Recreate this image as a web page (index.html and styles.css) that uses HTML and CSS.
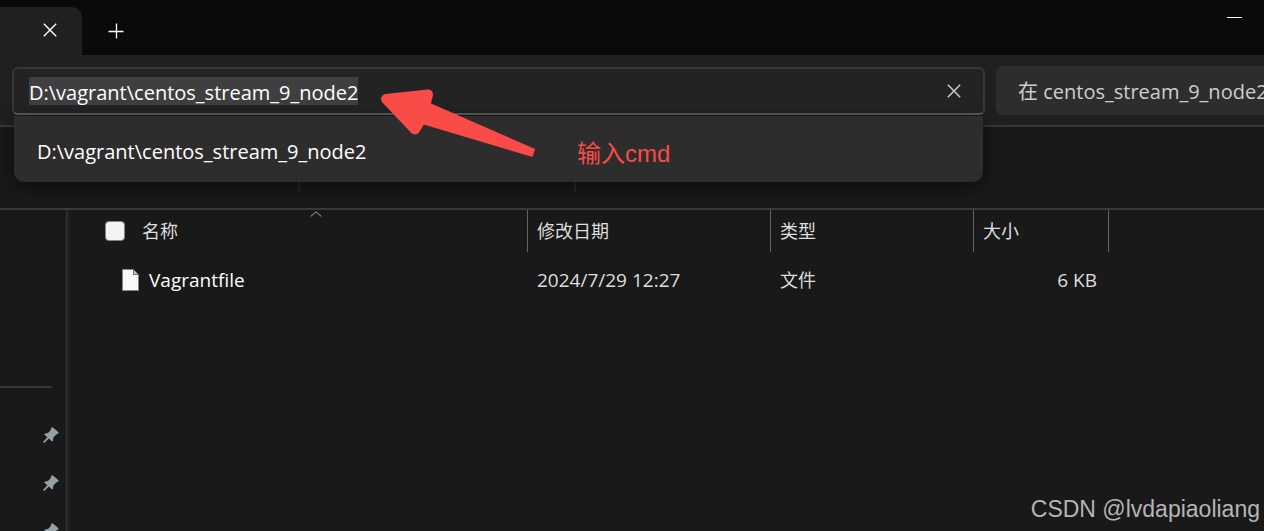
FILE: index.html
```html
<!DOCTYPE html>
<html lang="zh-CN">
<head>
<meta charset="utf-8">
<title>centos_stream_9_node2</title>
<link rel="stylesheet" href="styles.css">
</head>
<body>
<svg class="defs" aria-hidden="true">
  <symbol id="pin" viewBox="0 0 16 16"><path d="M8.4 .5 9.6 .3 15.5 5.3 15.4 6.6 13.3 7.6 10.6 10.3 9.8 14 8.7 14.2 5.8 11.5 1.4 15.7 .3 15.7 .3 14.6 4.4 10.2 1.4 7.8 1.7 6.8 5.3 5.8 7.6 3.2Z" fill="currentColor"/></symbol>
  <symbol id="cross" viewBox="0 0 14 14"><path d="M.8 .8 13.2 13.2M13.2 .8 .8 13.2" fill="none" stroke="currentColor" stroke-width="1.4"/></symbol>
</svg>
<div class="window">
  <header class="titlebar">
    <div class="tab"><button class="icon-button" aria-label="关闭标签页"><svg class="cross"><use href="#cross"/></svg></button></div>
    <button class="icon-button new-tab" aria-label="新建标签页"><svg class="plus" viewBox="0 0 16 16"><path d="M8.5 .5V15.5M.5 8.5H15.5" stroke="currentColor" stroke-width="1.3"/></svg></button>
    <button class="icon-button minimize" aria-label="最小化"><span class="minimize-line"></span></button>
  </header>
  <div class="navbar">
    <div class="address">
      <input class="address-input" type="text" aria-label="地址" value="D:\vagrant\centos_stream_9_node2" spellcheck="false">
      <button class="icon-button clear" aria-label="清除"><svg class="cross"><use href="#cross"/></svg></button>
      <div class="suggestions"><button class="suggestion">D:\vagrant\centos_stream_9_node2</button></div>
    </div>
    <div class="search"><input class="search-input" type="text" aria-label="搜索" placeholder="在 centos_stream_9_node2 中搜索"></div>
  </div>
  <div class="toolbar"><span class="separator"></span><span class="separator"></span></div>
  <div class="content">
    <nav class="sidebar">
      <div class="rule"></div>
      <button class="icon-button pin-item" aria-label="已固定 1"><svg class="pin"><use href="#pin"/></svg></button>
      <button class="icon-button pin-item" aria-label="已固定 2"><svg class="pin"><use href="#pin"/></svg></button>
      <button class="icon-button pin-item" aria-label="已固定 3"><svg class="pin"><use href="#pin"/></svg></button>
    </nav>
    <div class="splitter"></div>
    <main class="files">
      <table class="file-table">
        <colgroup><col class="col-name"><col class="col-date"><col class="col-type"><col class="col-size"></colgroup>
        <thead>
          <tr>
            <th class="name-head"><label class="name-label"><input class="check" type="checkbox">名称</label><svg class="sort" viewBox="0 0 12 6"><path d="M.7 5.5 6 .8 11.3 5.5" fill="none" stroke="currentColor"/></svg></th>
            <th>修改日期</th><th>类型</th><th>大小</th>
          </tr>
        </thead>
        <tbody>
          <tr>
            <td><div class="file-name"><svg class="file-icon" viewBox="0 0 17 22"><path d="M.5 .5H11.5L16.5 5.5V21.5H.5Z" fill="#fafafa" stroke="#858585"/><path d="M11.5 .5V5.5H16.5Z" fill="#c8c8c8" stroke="#707070"/></svg>Vagrantfile</div></td>
            <td>2024/7/29 12:27</td><td class="type">文件</td><td class="size">6 KB</td>
          </tr>
        </tbody>
      </table>
    </main>
  </div>
  <svg class="arrow" viewBox="0 0 156 48"><path d="M6 11 48 6.500 42 30 35 41.500Z" fill="#f94b47" stroke="#f94b47" stroke-width="10" stroke-linejoin="round"/><path d="M50 15 155 61 152.500 69 42 36Z" fill="#f94b47"/></svg>
  <div class="note">输入cmd</div>
  <div class="watermark">CSDN @lvdapiaoliang</div>
</div>
</body>
</html>
```
FILE: styles.css
```css
* { box-sizing: border-box; }
body {
  margin: 0;
  background: #191919;
  color: #fff;
  font: 20px/28px "Open Sans", "Noto Sans CJK SC", sans-serif;
}
button, input { margin: 0; padding: 0; border: 0; background: none; color: inherit; font: inherit; }
.defs { position: absolute; width: 0; height: 0; }
.window { position: relative; display: flex; flex-direction: column; height: 100vh; overflow: hidden; }
.icon-button { display: grid; place-items: center; flex: none; }
.cross { width: 14px; height: 14px; }

.titlebar { display: flex; height: 55px; background: #0a0a0a; }
.tab {
  display: flex;
  justify-content: flex-end;
  width: 82px;
  margin-top: 7px;
  padding: 0 16px 0 0;
  border-radius: 0 10px 0 0;
  background: #202020;
}
.tab .icon-button { width: 32px; height: 46px; }
.new-tab { width: 68px; height: 62px; }
.plus { width: 16px; height: 16px; }
.minimize { width: 60px; height: 35px; margin-left: auto; }
.minimize-line { width: 15px; height: 1px; background: #fff; }

.navbar { display: flex; gap: 11px; height: 72px; padding: 11px 0 10px 12px; border-bottom: 2px solid #373737; background: #202020; }
.address {
  position: relative;
  display: flex;
  align-items: center;
  justify-content: space-between;
  flex: 1;
  min-width: 0;
  height: 48px;
  margin-top: 1px;
  padding: 0 14px 0 15px;
  border: 2px solid #373737;
  border-bottom-color: #5c5c5c;
  border-radius: 6px;
  background: #232323;
}
.address-input { field-sizing: content; height: 28px; padding-top: 3px; background: #3f3f3f; outline: none; }
.clear { width: 30px; height: 32px; color: #d0d0d0; }
.suggestions {
  position: absolute;
  z-index: 1;
  top: 100%;
  left: 0;
  right: 0;
  margin-top: 3px;
  padding: 22px 23px 16px;
  border-radius: 0 0 10px 10px;
  background: #2d2d2d;
  box-shadow: 0 4px 16px #0008, 0 -1px #191919;
}
.suggestion { display: block; height: 28px; }
.search { flex: 0 0 268px; height: 49px; padding: 0 0 0 22px; overflow: hidden; border-radius: 6px 0 0 6px; background: #2d2d2d; }
.search-input { width: 360px; height: 49px; padding-top: 2px; outline: none; }
.search-input::placeholder { color: #cecece; opacity: 1; }

.toolbar { display: flex; align-items: flex-end; gap: 274px; height: 83px; padding: 0 0 17px 298px; border-bottom: 2px solid #3a3a3a; }
.separator { width: 2px; height: 36px; background: #2a2a2a; }

.content { display: flex; flex: 1; min-height: 0; }
.sidebar { width: 64px; padding-top: 176px; overflow: hidden; }
.rule { width: 52px; height: 2px; margin-bottom: 23px; background: #373737; }
.pin-item { width: 52px; height: 48px; padding-left: 35px; margin-left: 8px; color: #95a0a7; }
.sidebar .pin-item { justify-items: start; }
.pin { width: 16px; height: 16px; }
.splitter { width: 5px; border-left: 1px solid #111; border-right: 1px solid #222; background: #292929; }
.files { flex: 1; min-width: 0; font-size: 18px; }
.file-table { width: 1040px; border-collapse: separate; border-spacing: 0; table-layout: fixed; }
.col-name { width: 459px; }
.col-date { width: 243px; }
.col-type { width: 203px; }
.col-size { width: 135px; }
.file-table th { height: 42px; padding: 0 0 0 9px; border-right: 1px solid #636363; color: #dedede; font-weight: 400; text-align: left; }
.file-table td { height: 56px; padding: 0 0 0 9px; color: #dedede; font-size: 19px; }
.file-table .type { font-size: 18px; }
.file-table .size { padding-right: 12px; text-align: right; }
.file-table .name-head { position: relative; padding-left: 36px; }
.name-label { display: flex; align-items: center; gap: 17px; }
.check { appearance: none; width: 20px; height: 20px; border: 1px solid #858585; border-radius: 4px; background: #f3f3f3; }
.sort { position: absolute; top: 1px; left: 241px; width: 12px; height: 6px; color: #aaa; }
.file-name { display: flex; align-items: center; gap: 10px; padding-left: 44px; color: #fff; }
.file-icon { width: 17px; height: 22px; }

.arrow { position: absolute; z-index: 2; left: 380px; top: 88px; width: 156px; height: 48px; overflow: visible; }
.note { position: absolute; z-index: 2; left: 577px; top: 140px; color: #f94b47; font: 24px/28px "Liberation Sans", "Noto Sans CJK SC", sans-serif; }
.watermark { position: absolute; right: 4px; bottom: 8px; color: #b5b5b5; font: 23px/28px "Liberation Sans", sans-serif; }
```
